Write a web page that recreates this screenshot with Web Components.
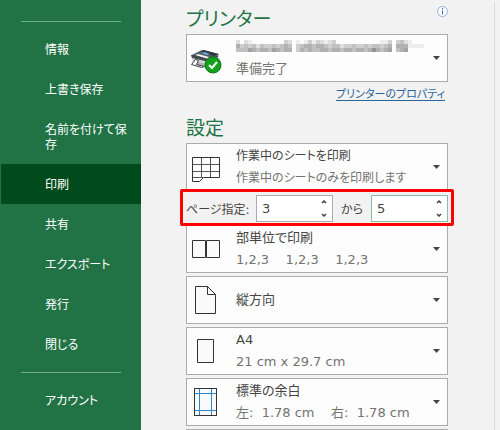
<!DOCTYPE html>
<html lang="ja">
<head>
<meta charset="utf-8">
<title>印刷</title>
<style>
  body {
    margin: 0;
    background: #f2f2f2;
    color: #444;
    font-family: "DejaVu Sans", "Noto Sans CJK JP", sans-serif;
    font-size: 13px;
    font-feature-settings: "palt";
  }
</style>
</head>
<body>
<print-backstage>
  <backstage-nav slot="nav">
    <nav-divider></nav-divider>
    <nav-item>情報</nav-item>
    <nav-item>上書き保存</nav-item>
    <nav-item>名前を付けて保存</nav-item>
    <nav-item selected>印刷</nav-item>
    <nav-item>共有</nav-item>
    <nav-item>エクスポート</nav-item>
    <nav-item>発行</nav-item>
    <nav-item>閉じる</nav-item>
    <nav-divider></nav-divider>
    <nav-item>アカウント</nav-item>
  </backstage-nav>

  <section-title>プリンター<info-button slot="action"></info-button></section-title>
  <option-picker icon="printer" label="プリンター"><masked-name></masked-name><span slot="detail">準備完了</span></option-picker>
  <property-link>プリンターのプロパティ</property-link>

  <section-title>設定</section-title>
  <setting-list>
    <div>
      <option-picker icon="sheet" compact>作業中のシートを印刷<span slot="detail">作業中のシートのみを印刷します</span></option-picker>
      <page-range from="3" to="5"></page-range>
      <option-picker icon="collate">部単位で印刷<span slot="detail">1,2,3&nbsp;&nbsp;&nbsp;&nbsp;1,2,3&nbsp;&nbsp;&nbsp;&nbsp;1,2,3</span></option-picker>
    </div>
    <option-picker icon="portrait">縦方向</option-picker>
    <option-picker icon="paper">A4<span slot="detail">21 cm x 29.7 cm</span></option-picker>
    <option-picker icon="margins">標準の余白<span slot="detail">左:&nbsp; 1.78 cm&nbsp;&nbsp;&nbsp;&nbsp;右:&nbsp; 1.78 cm</span></option-picker>
    <option-picker icon="scale" label="拡大縮小"></option-picker>
  </setting-list>
</print-backstage>

<script>
const ICONS = {
  printer: `
    <path d="M1 13l11-5 17 4v10l-8 5-18-5z" fill="#d5d9dd" />
    <path d="M2 13l10-5 17 4-9 6z" fill="#535b63" />
    <path d="M11 10l3-2 14 4-4 2z" fill="#2c343c" />
    <path d="M11 11l4-1 5 2-4 1z" fill="#69a5dc" />
    <path d="M5 13l3-1 11 3-2 2z" fill="#f4f5f6" />
    <path d="M1 13l3 0 15 4 9-4v2l-9 5L2 16z" fill="#434a51" />
    <path d="M4 19l13 3v3L4 22z" fill="#aeb4b9" />
    <path d="M1.500 22.500l4-5 3 1-2 4 8 2-3 1z" fill="#fff" stroke="#353b41" />
    <circle cx="23" cy="23" r="8" fill="#13a01c" stroke="#0a7a12" />
    <path d="M19 23l3 3 5-6" fill="none" stroke="#fff" stroke-width="2" />`,
  sheet: `
    <path d="M2.500 6.500h27v20h-16l-4 4h-7z" fill="#fff" stroke="#333" />
    <path d="M11.500 7v19M20.500 7v19M3 13.500h26M3 20.500h26M3 26.500h10" fill="none" stroke="#555" />`,
  collate: `
    <path d="M2.500 7.500h13v17h-13zM16.500 7.500h13v17h-13z" fill="#fafafa" stroke="#333" />`,
  portrait: `
    <path d="M5.500 2.500h12l8 8v19h-20zM17.500 2.500v8h8" fill="#fafafa" stroke="#333" />`,
  paper: `
    <path d="M7.500 4.500h16v23h-16z" fill="#fafafa" stroke="#333" />`,
  margins: `
    <path d="M4.500 2.500h22v27h-22z" fill="#fafafa" stroke="#333" />
    <path d="M9.500 3v26M21.500 3v26M5 7.500h21M5 24.500h21" stroke="#2a86cf" />
    <path d="M4.500 2.500h22v27h-22z" fill="none" stroke="#333" />`,
  scale: `<path d="M6.500 4.500h18v23h-18z" fill="#fafafa" stroke="#333" />`
};

class BaseElement extends HTMLElement {
  constructor() {
    super();
    this.attachShadow({ mode: 'open' });
  }

  connectedCallback() {
    this.shadowRoot.innerHTML = this.render();
  }
}

class PrintBackstage extends BaseElement {
  render() {
    return `
      <style>
        :host { display: flex; height: 100vh; overflow: hidden; }
        main {
          flex: 1;
          min-width: 0;
          box-sizing: border-box;
          margin: 2px 5px 0 0;
          padding: 0 46px 0 45px;
          border-right: 1px solid #d9d9d9;
        }
      </style>
      <slot name="nav"></slot>
      <main><slot></slot></main>`;
  }
}

class BackstageNav extends BaseElement {
  render() {
    return `
      <style>
        :host {
          flex: none;
          width: 141px;
          box-sizing: border-box;
          padding-top: 13px;
          background: #217346;
          color: #fff;
          font-size: 12px;
        }
      </style>
      <nav><slot></slot></nav>`;
  }
}

class NavDivider extends BaseElement {
  render() {
    return `
      <style>
        :host { display: block; height: 1px; margin: 8px 20px 7px 21px; background: #6fae89; }
      </style>`;
  }
}

class NavItem extends BaseElement {
  render() {
    return `
      <style>
        :host { display: block; padding-left: 1px; }
        button {
          display: block;
          width: 100%;
          padding: 14px 12px 11px 44px;
          border: 0;
          background: none;
          color: inherit;
          font: inherit;
          font-feature-settings: inherit;
          line-height: 15px;
          text-align: left;
        }
        :host([selected]) button { background: #004b1c; }
      </style>
      <button type="button"><slot></slot></button>`;
  }
}

class SectionTitle extends BaseElement {
  render() {
    return `
      <style>
        :host { display: flex; justify-content: space-between; height: 32px; }
        h2 {
          margin: 0;
          color: #217346;
          font-size: 19px;
          font-weight: 400;
          line-height: 34px;
        }
      </style>
      <h2><slot></slot></h2>
      <slot name="action"></slot>`;
  }
}

class InfoButton extends BaseElement {
  render() {
    return `
      <style>
        :host { display: block; padding-top: 4px; }
        button { display: block; padding: 0; border: 0; background: none; }
        svg { display: block; }
      </style>
      <button type="button" aria-label="情報">
        <svg width="11" height="11" viewBox="0 0 11 11">
          <circle cx="5.500" cy="5.500" r="5" fill="#fff" stroke="#8fb0e3" />
          <path d="M5.500 2v1.500M5.500 4.500v4" stroke="#3f62a8" />
        </svg>
      </button>`;
  }
}

class OptionPicker extends BaseElement {
  render() {
    const label = this.getAttribute('label');
    return `
      <style>
        :host { display: block; }
        :host([compact]) { font-size: 12px; }
        button {
          display: grid;
          grid-template-columns: 32px minmax(0, 1fr) 7px;
          column-gap: 14px;
          align-items: center;
          width: 100%;
          height: 48px;
          padding: 0 7px 0 3px;
          border: 1px solid #ababab;
          background: #fdfdfd;
          color: #444;
          font: inherit;
          font-feature-settings: inherit;
          line-height: 22px;
          text-align: left;
          white-space: nowrap;
        }
        svg { display: block; }
        .detail { display: block; color: #737373; }
      </style>
      <button type="button" aria-haspopup="listbox" ${label ? `aria-label="${label}"` : ''}>
        <svg width="32" height="32" viewBox="0 0 32 32">${ICONS[this.getAttribute('icon')]}</svg>
        <span>
          <slot></slot>
          <span class="detail"><slot name="detail"></slot></span>
        </span>
        <svg width="7" height="4" viewBox="0 0 7 4"><path d="M0 0h7L3.500 4z" fill="#444" /></svg>
      </button>`;
  }
}

// Printer name hidden behind a mosaic of grey blocks
class MaskedName extends BaseElement {
  render() {
    const rows = [
      '20210000000032010131321230000000000011303421000',
      '53434243343454034554554344233433434434505551111',
      '44465455465455035454455455455455457545604560000'
    ];
    const blocks = rows.map((row, y) => [...row].map((level, x) =>
      level === '0' ? '' : `<rect x="${x * 4}" y="${y * 4}" width="4" height="4" fill="#666" opacity="${level / 10}" />`
    ).join('')).join('');
    return `
      <style>
        :host { display: block; height: 22px; }
        svg { display: block; padding-top: 4px; }
      </style>
      <svg width="188" height="12" viewBox="0 0 188 12">${blocks}</svg>`;
  }
}

class PropertyLink extends BaseElement {
  render() {
    return `
      <style>
        :host { display: block; height: 29px; padding-right: 3px; font-size: 11px; line-height: 26px; text-align: right; }
        a { color: #2a6496; text-underline-offset: 2px; }
      </style>
      <a href="#"><slot></slot></a>`;
  }
}

class SettingList extends BaseElement {
  render() {
    return `
      <style>
        :host { display: flex; flex-direction: column; gap: 3px; }
      </style>
      <slot></slot>`;
  }
}

class PageSpinner extends BaseElement {
  render() {
    return `
      <style>
        :host { display: block; width: 77px; font-size: 13px; }
        .box {
          display: flex;
          align-items: center;
          box-sizing: border-box;
          height: 27px;
          padding: 0 5px;
          border: 1px solid #ababab;
          background: #fff;
        }
        :host([active]) .box { border-color: #86bfa0; }
        input {
          flex: 1;
          min-width: 0;
          padding: 0;
          border: 0;
          outline: 0;
          background: none;
          color: #444;
          font: inherit;
        }
        .arrows { display: flex; flex-direction: column; gap: 9px; }
        button { display: block; padding: 0; border: 0; background: none; }
        svg { display: block; }
      </style>
      <div class="box">
        <input type="text" inputmode="numeric" value="${this.getAttribute('value')}" aria-label="${this.getAttribute('label')}">
        <span class="arrows">
          <button type="button" aria-label="増やす"><svg width="6" height="4" viewBox="0 0 6 4"><path d="M1 3l2-2 2 2" fill="none" stroke="#444" stroke-width="1.500" /></svg></button>
          <button type="button" aria-label="減らす"><svg width="6" height="4" viewBox="0 0 6 4"><path d="M1 1l2 2 2-2" fill="none" stroke="#444" stroke-width="1.500" /></svg></button>
        </span>
      </div>`;
  }
}

class PageRange extends BaseElement {
  render() {
    return `
      <style>
        :host {
          position: relative;
          display: flex;
          align-items: center;
          height: 34px;
          font-size: 12px;
        }
        /* highlight frame laid over the row and the edges of its neighbours */
        .frame {
          position: absolute;
          inset: -2px -6px -1px;
          border: 3px solid #fe0000;
          border-radius: 2px;
          pointer-events: none;
        }
        .label { flex: none; width: 70px; white-space: nowrap; }
        .between { flex: 1; text-align: center; white-space: nowrap; }
        page-spinner { flex: none; }
      </style>
      <span class="label">ページ指定:</span>
      <page-spinner value="${this.getAttribute('from')}" label="開始ページ"></page-spinner>
      <span class="between">から</span>
      <page-spinner value="${this.getAttribute('to')}" label="終了ページ" active></page-spinner>
      <span class="frame"></span>`;
  }
}

customElements.define('print-backstage', PrintBackstage);
customElements.define('backstage-nav', BackstageNav);
customElements.define('nav-divider', NavDivider);
customElements.define('nav-item', NavItem);
customElements.define('section-title', SectionTitle);
customElements.define('info-button', InfoButton);
customElements.define('option-picker', OptionPicker);
customElements.define('masked-name', MaskedName);
customElements.define('property-link', PropertyLink);
customElements.define('setting-list', SettingList);
customElements.define('page-spinner', PageSpinner);
customElements.define('page-range', PageRange);
</script>
</body>
</html>
